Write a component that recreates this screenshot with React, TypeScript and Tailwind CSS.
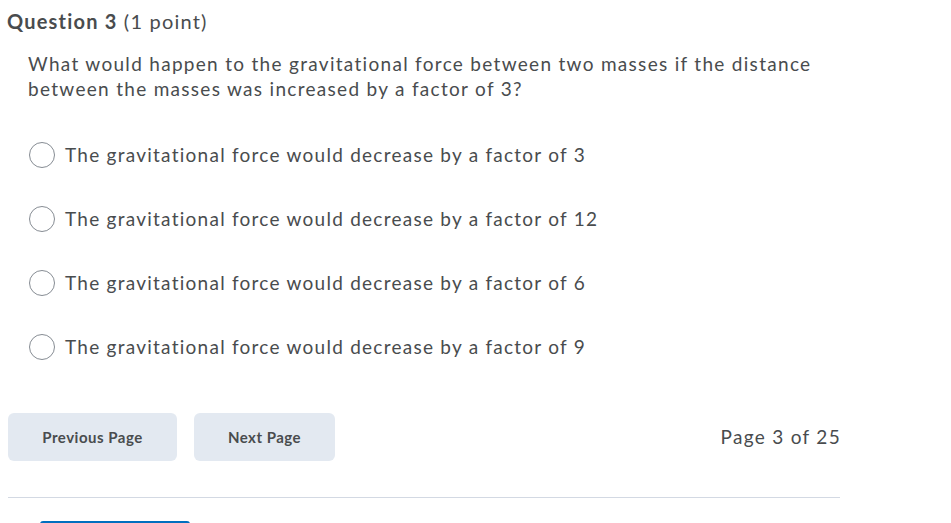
import React from 'react';

const options = [
  'The gravitational force would decrease by a factor of 3',
  'The gravitational force would decrease by a factor of 12',
  'The gravitational force would decrease by a factor of 6',
  'The gravitational force would decrease by a factor of 9',
];

export default function App() {
  return (
    <div className="h-[523px] bg-white text-[#494c4e] font-['Lato','Noto_Sans',sans-serif] overflow-hidden">
      <div className="w-[832px] ml-2">
        <h2 className="text-[20px] leading-[24px] pt-[9px] -ml-[1px] tracking-[1.2px]">
          <span className="font-bold">Question 3</span> <span>(1 point)</span>
        </h2>

        <div className="pl-5 pt-[18px]">
          <p className="text-[19px] leading-[25px] w-[800px] tracking-[1.3px]">
            What would happen to the gravitational force between two masses if the distance between the masses was increased by a factor of 3?
          </p>

          <div className="flex flex-col gap-[38px] pt-[41px]">
            {options.map((opt) => (
              <label key={opt} className="flex items-center h-[26px] cursor-pointer">
                <span className="w-[26px] h-[26px] rounded-full border border-[#868c93] bg-white ml-[1px] mr-[10px] shrink-0" />
                <span className="text-[19px] leading-[26px] tracking-[1.25px]">{opt}</span>
              </label>
            ))}
          </div>
        </div>

        <div className="flex items-center mt-[53px]">
          <button className="w-[169px] h-[48px] rounded-[6px] bg-[#e3e9f1] text-[15px] font-bold text-[#494c4e] tracking-[0.5px]">
            Previous Page
          </button>
          <button className="w-[141px] h-[48px] rounded-[6px] bg-[#e3e9f1] text-[15px] font-bold text-[#494c4e] tracking-[0.5px] ml-[17px]">
            Next Page
          </button>
          <span className="ml-auto text-[19px] tracking-[1.3px] -mr-[1px]">Page 3 of 25</span>
        </div>

        <div className="mt-[36px] border-t border-[#d3d9e3]" />
        <div className="ml-[32px] mt-[23px] w-[150px] h-[3px] rounded-t bg-[#006fbf]" />
      </div>
    </div>
  );
}
